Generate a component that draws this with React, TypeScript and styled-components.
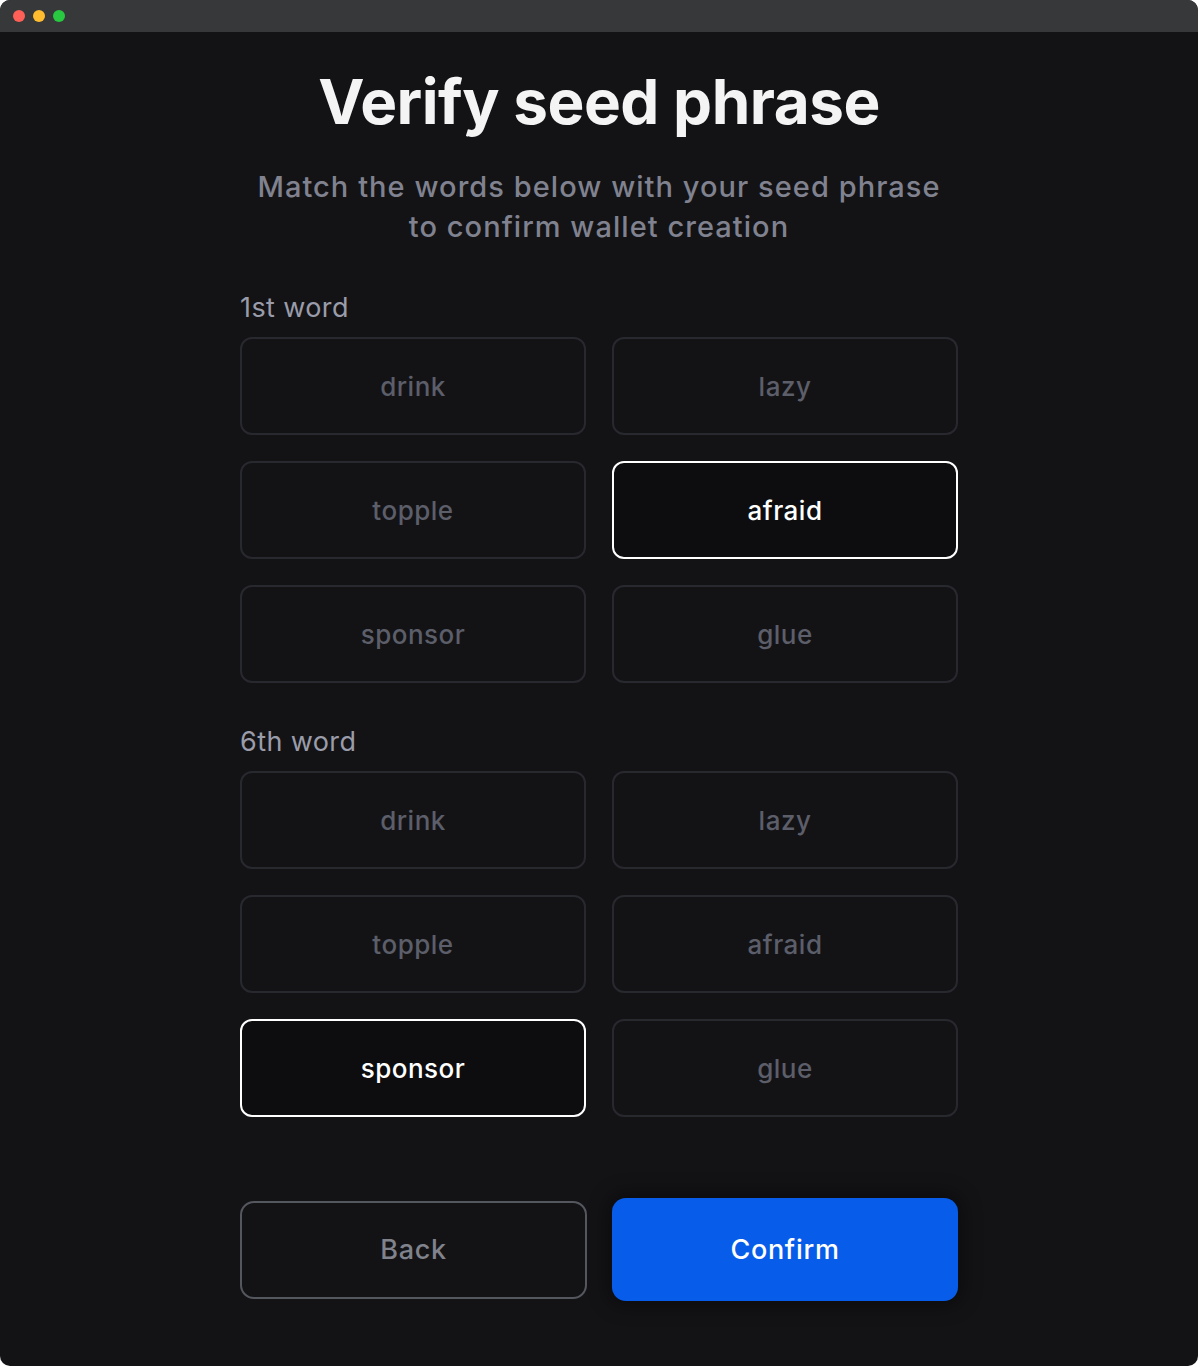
import React from "react";
import styled, { createGlobalStyle } from "styled-components";

const Global = createGlobalStyle`
  html, body { margin: 0; padding: 0; background: #ffffff; }
  body { font-family: "Inter", "Lato", sans-serif; }
  * { box-sizing: border-box; }
`;

const Window = styled.div`
  width: 1198px;
  height: 1366px;
  border-radius: 10px;
  overflow: hidden;
  background: #131316;
  display: flex;
  flex-direction: column;
`;

const TitleBar = styled.div`
  height: 32px;
  flex: 0 0 32px;
  background: #37383a;
  display: flex;
  align-items: center;
  padding-left: 13px;
  gap: 8px;
`;

const Dot = styled.span<{ $c: string }>`
  width: 12px;
  height: 12px;
  border-radius: 50%;
  background: ${(p) => p.$c};
`;

const Content = styled.main`
  width: 718px;
  margin: 0 auto;
  padding-top: 34px;
  display: flex;
  flex-direction: column;
`;

const Title = styled.h1`
  margin: 0;
  text-align: center;
  font-size: 62px;
  line-height: 72px;
  font-weight: 700;
  letter-spacing: -0.5px;
  color: #f4f4f5;
`;

const Subtitle = styled.p`
  margin: 29px 0 0;
  text-align: center;
  font-size: 29px;
  line-height: 40px;
  font-weight: 500;
  letter-spacing: 1.05px;
  color: #80828f;
`;

const Section = styled.section<{ $top: number }>`
  margin-top: ${(p) => p.$top}px;
  display: flex;
  flex-direction: column;
  gap: 14px;
`;

const Label = styled.div`
  font-size: 27px;
  line-height: 32px;
  letter-spacing: 0.4px;
  color: #9a9caa;
  transform: translateY(1px);
`;

const Grid = styled.div`
  display: grid;
  grid-template-columns: 346px 346px;
  column-gap: 26px;
  row-gap: 26px;
`;

const Word = styled.button<{ $selected?: boolean }>`
  height: 98px;
  border-radius: 12px;
  border: ${(p) => (p.$selected ? "2px solid #ffffff" : "2px solid #28292e")};
  background: ${(p) => (p.$selected ? "#0d0d0f" : "transparent")};
  color: ${(p) => (p.$selected ? "#ffffff" : "#5c5e69")};
  font-family: inherit;
  font-size: 26px;
  font-weight: 500;
  letter-spacing: 0.5px;
  cursor: pointer;
  padding: 0;
`;

const Actions = styled.div`
  margin-top: 81px;
  display: grid;
  grid-template-columns: 347px 346px;
  column-gap: 25px;
  align-items: center;
`;

const BackButton = styled.button`
  height: 98px;
  border-radius: 14px;
  border: 2px solid #55575f;
  background: transparent;
  color: #80828c;
  font-family: inherit;
  font-size: 27px;
  font-weight: 500;
  letter-spacing: 0.7px;
  cursor: pointer;
`;

const ConfirmButton = styled.button`
  height: 103px;
  border-radius: 14px;
  border: none;
  background: #075de9;
  color: #ffffff;
  font-family: inherit;
  font-size: 27px;
  font-weight: 500;
  letter-spacing: 0.7px;
  cursor: pointer;
  box-shadow: 0 0 18px 6px rgba(0, 0, 0, 0.35);
`;

const words = ["drink", "lazy", "topple", "afraid", "sponsor", "glue"];

function WordGroup({ label, selected, top }: { label: string; selected: string; top: number }) {
  return (
    <Section $top={top}>
      <Label>{label}</Label>
      <Grid>
        {words.map((w) => (
          <Word key={w} $selected={w === selected}>
            {w}
          </Word>
        ))}
      </Grid>
    </Section>
  );
}

export default function App() {
  return (
    <>
      <Global />
      <Window>
        <TitleBar>
          <Dot $c="#fe5f57" />
          <Dot $c="#febc2e" />
          <Dot $c="#28c840" />
        </TitleBar>
        <Content>
          <Title>Verify seed phrase</Title>
          <Subtitle>
            Match the words below with your seed phrase
            <br />
            to confirm wallet creation
          </Subtitle>
          <WordGroup label="1st word" selected="afraid" top={44} />
          <WordGroup label="6th word" selected="sponsor" top={42} />
          <Actions>
            <BackButton>Back</BackButton>
            <ConfirmButton>Confirm</ConfirmButton>
          </Actions>
        </Content>
      </Window>
    </>
  );
}
